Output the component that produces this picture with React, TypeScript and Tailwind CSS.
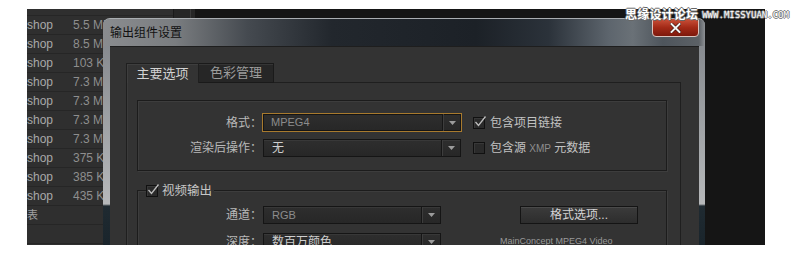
const sizes = ['5.5 MB', '8.5 MB', '103 KB', '7.3 MB', '7.3 MB', '7.3 MB', '7.3 MB', '375 KB', '385 KB', '435 KB']

function Check({ on }: { on?: boolean }) {
  return (
    <span className="relative flex h-[12px] w-[12px] shrink-0 border border-[#111] bg-[#2a2a2a] shadow-[inset_1px_1px_0_#383838]">
      {on && (
        <svg className="absolute -top-[3px] left-0" width="13" height="13" viewBox="0 0 13 13">
          <path d="M1.5 7 L4.5 10.5 L11.5 1.5" fill="none" stroke="#bdbdbd" strokeWidth="1.3" />
        </svg>
      )}
    </span>
  )
}

function Select({ value, className, dim }: { value: string; className: string; dim?: boolean }) {
  return (
    <div className={`flex items-stretch bg-gradient-to-b from-[#2e2e2e] to-[#272727] ${className}`}>
      <span className={`flex flex-1 items-center pl-[8px] ${dim ? 'text-[11px] text-[#8c8c8c]' : 'text-[12px] text-[#cfcfcf]'}`}>
        {value}
      </span>
      <span className="flex w-[19px] items-center justify-center border-l border-[#161616] shadow-[inset_1px_0_0_#3d3d3d]">
        <svg width="7" height="4" viewBox="0 0 7 4">
          <polygon points="0,0 7,0 3.5,4" fill="#9c9c9c" />
        </svg>
      </span>
    </div>
  )
}

export default function App() {
  return (
    <div className="relative h-[265px] w-[800px] overflow-hidden bg-white pl-[27px] pt-[9px] font-['Liberation_Sans','Noto_Sans_CJK_SC',sans-serif]">
      <div className="relative flex h-[236px] w-[738px] overflow-hidden bg-[#171717]">
        {/* file list behind the dialog */}
        <div className="flex w-[146px] shrink-0 flex-col overflow-hidden bg-[#2f2f2f] text-[12px]">
          <div className="h-[7px] shrink-0 border-b border-[#262626]" />
          {sizes.map((s, i) => (
            <div key={i} className="flex h-[19px] shrink-0 items-center border-b border-[#262626] whitespace-nowrap">
              <span className="w-[46px] shrink-0 text-[#a8a8a8]">shop</span>
              <span className="text-[#8e8e8e]">{s}</span>
            </div>
          ))}
          <div className="flex h-[19px] shrink-0 items-center border-b border-[#262626] text-[11px] text-[#a0a0a0]">
            <span>表</span>
          </div>
          <div className="h-[19px] shrink-0 border-b border-[#262626]" />
        </div>
        <div className="flex w-[22px] shrink-0 border-l border-[#1a1a1a] bg-[#262626]">
          <div className="ml-[16px] w-[1px] bg-[#3a3a3a]" />
          <div className="ml-[4px] w-[1px] bg-[#3a3a3a]" />
        </div>
        <div className="flex-1 bg-[#151515]" />

        {/* dialog window */}
        <div className="absolute left-[76px] top-[9px] flex h-[240px] w-[602px] flex-col overflow-hidden rounded-t-[7px] border-t border-[#a9adb1] bg-[linear-gradient(to_bottom,#7f8388_0px,#a3a6a9_120px,#b6b8ba_185px,#1f2a31_187px,#18232a_100%)]">
          <div className="relative flex h-[27px] shrink-0 items-center bg-[linear-gradient(90deg,#8a8c8f_0%,#7a7d80_12%,#454a50_24%,#22272d_38%,#1c2127_62%,#2b323a_74%,#5d656d_84%,#6a7177_88%,#4e555c_93%,#5c6166_99%,#8d9094_100%)] pl-[7px]">
            <span className="text-[12px] text-[#111]">输出组件设置</span>
            <div className="absolute right-[6px] top-[-1px] flex h-[19px] w-[47px] items-center justify-center rounded-b-[4px] rounded-t-[2px] border border-[#d9c3bd] bg-[linear-gradient(to_bottom,#c9513a_0%,#a32a17_50%,#7d180c_100%)]">
              <svg width="11" height="10" viewBox="0 0 11 10">
                <path d="M1.5 1 L9.5 9 M9.5 1 L1.5 9" stroke="#3a0a05" strokeWidth="3.2" strokeLinecap="square" />
                <path d="M1.5 1 L9.5 9 M9.5 1 L1.5 9" stroke="#f2f2f2" strokeWidth="2" strokeLinecap="square" />
              </svg>
            </div>
          </div>

          <div className="ml-[7px] mr-[6px] flex-1 border-t border-[#1e1e1e] bg-[#333333] pl-[16px] pt-[16px] shadow-[0_-1px_0_#a8a8a8]">
            {/* tabs */}
            <div className="flex h-[20px] w-[555px] text-[13px]">
              <div className="flex w-[73px] items-center justify-center border border-b-0 border-[#1f1f1f] text-[#d2d2d2] shadow-[inset_1px_1px_0_#3e3e3e]">
                主要选项
              </div>
              <div className="flex w-[75px] items-center justify-center border-y border-r border-[#1a1a1a] bg-[#262626] text-[#9c9c9c] shadow-[inset_0_1px_0_#353535]">
                色彩管理
              </div>
              <div className="flex-1 border-b border-[#1f1f1f]" />
            </div>

            <div className="h-[200px] w-[555px] border-x border-[#1f1f1f] pl-[10px] pr-[13px] pt-[17px] shadow-[inset_1px_0_0_#3b3b3b]">
              {/* main options group */}
              <div className="h-[71px] w-[530px] border border-[#1c1c1c] pt-[12px] shadow-[inset_1px_1px_0_#3d3d3d,1px_1px_0_#3d3d3d]">
                <div className="flex h-[19px] items-center">
                  <span className="w-[124px] text-right text-[12px] text-[#b9b9b9]">格式：</span>
                  <Select value="MPEG4" dim className="h-[19px] w-[200px] border border-[#a87a2e] shadow-[inset_0_0_0_1px_#151515]" />
                  <span className="ml-[11px]">
                    <Check on />
                  </span>
                  <span className="ml-[5px] text-[12px] text-[#c2c2c2]">包含项目链接</span>
                </div>
                <div className="mt-[7px] flex h-[18px] items-center">
                  <span className="w-[124px] text-right text-[12px] text-[#b9b9b9]">渲染后操作：</span>
                  <Select value="无" className="ml-[1px] h-[18px] w-[198px] border border-[#151515] shadow-[inset_0_1px_0_#383838]" />
                  <span className="ml-[12px]">
                    <Check />
                  </span>
                  <span className="ml-[5px] text-[12px] text-[#c2c2c2]">
                    包含源 <span className="text-[10px] text-[#8e8e8e]">XMP</span> 元数据
                  </span>
                </div>
              </div>

              {/* video output group */}
              <div className="relative mt-[19px] h-[80px] w-[530px] border border-[#1c1c1c] pt-[15px] shadow-[inset_1px_1px_0_#3d3d3d,1px_1px_0_#3d3d3d]">
                <div className="absolute -top-[7px] left-[8px] flex items-center gap-[4px] bg-[#333333] pr-[2px]">
                  <Check on />
                  <span className="text-[12.5px] leading-[14px] text-[#c6c6c6]">视频输出</span>
                </div>
                <div className="flex h-[18px] items-center">
                  <span className="w-[124px] text-right text-[12px] text-[#b9b9b9]">通道：</span>
                  <Select value="RGB" dim className="ml-[1px] h-[18px] w-[178px] border border-[#151515] shadow-[inset_0_1px_0_#383838]" />
                  <div className="ml-[79px] flex h-[18px] w-[118px] items-center justify-center border border-[#141414] bg-gradient-to-b from-[#3b3b3b] to-[#2d2d2d] text-[12px] text-[#d4d4d4] shadow-[inset_0_1px_0_#4a4a4a]">
                    格式选项...
                  </div>
                </div>
                <div className="mt-[9px] flex h-[18px] items-center">
                  <span className="w-[124px] text-right text-[12px] text-[#b9b9b9]">深度：</span>
                  <Select value="数百万颜色" className="ml-[1px] h-[18px] w-[178px] border border-[#151515] shadow-[inset_0_1px_0_#383838]" />
                  <span className="ml-[59px] text-[9px] text-[#9a9a9a]">MainConcept MPEG4 Video</span>
                </div>
              </div>
            </div>
          </div>
        </div>
      </div>

      {/* watermark */}
      <div className="absolute left-[625px] top-[8px] flex items-center gap-[4px] whitespace-nowrap">
        <span className="text-[12px] font-bold leading-[14px] tracking-[0.2px] text-white [text-shadow:1px_0_0_#666,-1px_0_0_#666,0_1px_0_#666,0_-1px_0_#666]">
          思缘设计论坛
        </span>
        <span className="font-['DejaVu_Sans_Mono',monospace] text-[9px] leading-[14px] text-white [text-shadow:1px_0_0_#777,-1px_0_0_#777,0_1px_0_#777,0_-1px_0_#777]">
          WWW.MISSYUAN.COM
        </span>
      </div>
    </div>
  )
}
